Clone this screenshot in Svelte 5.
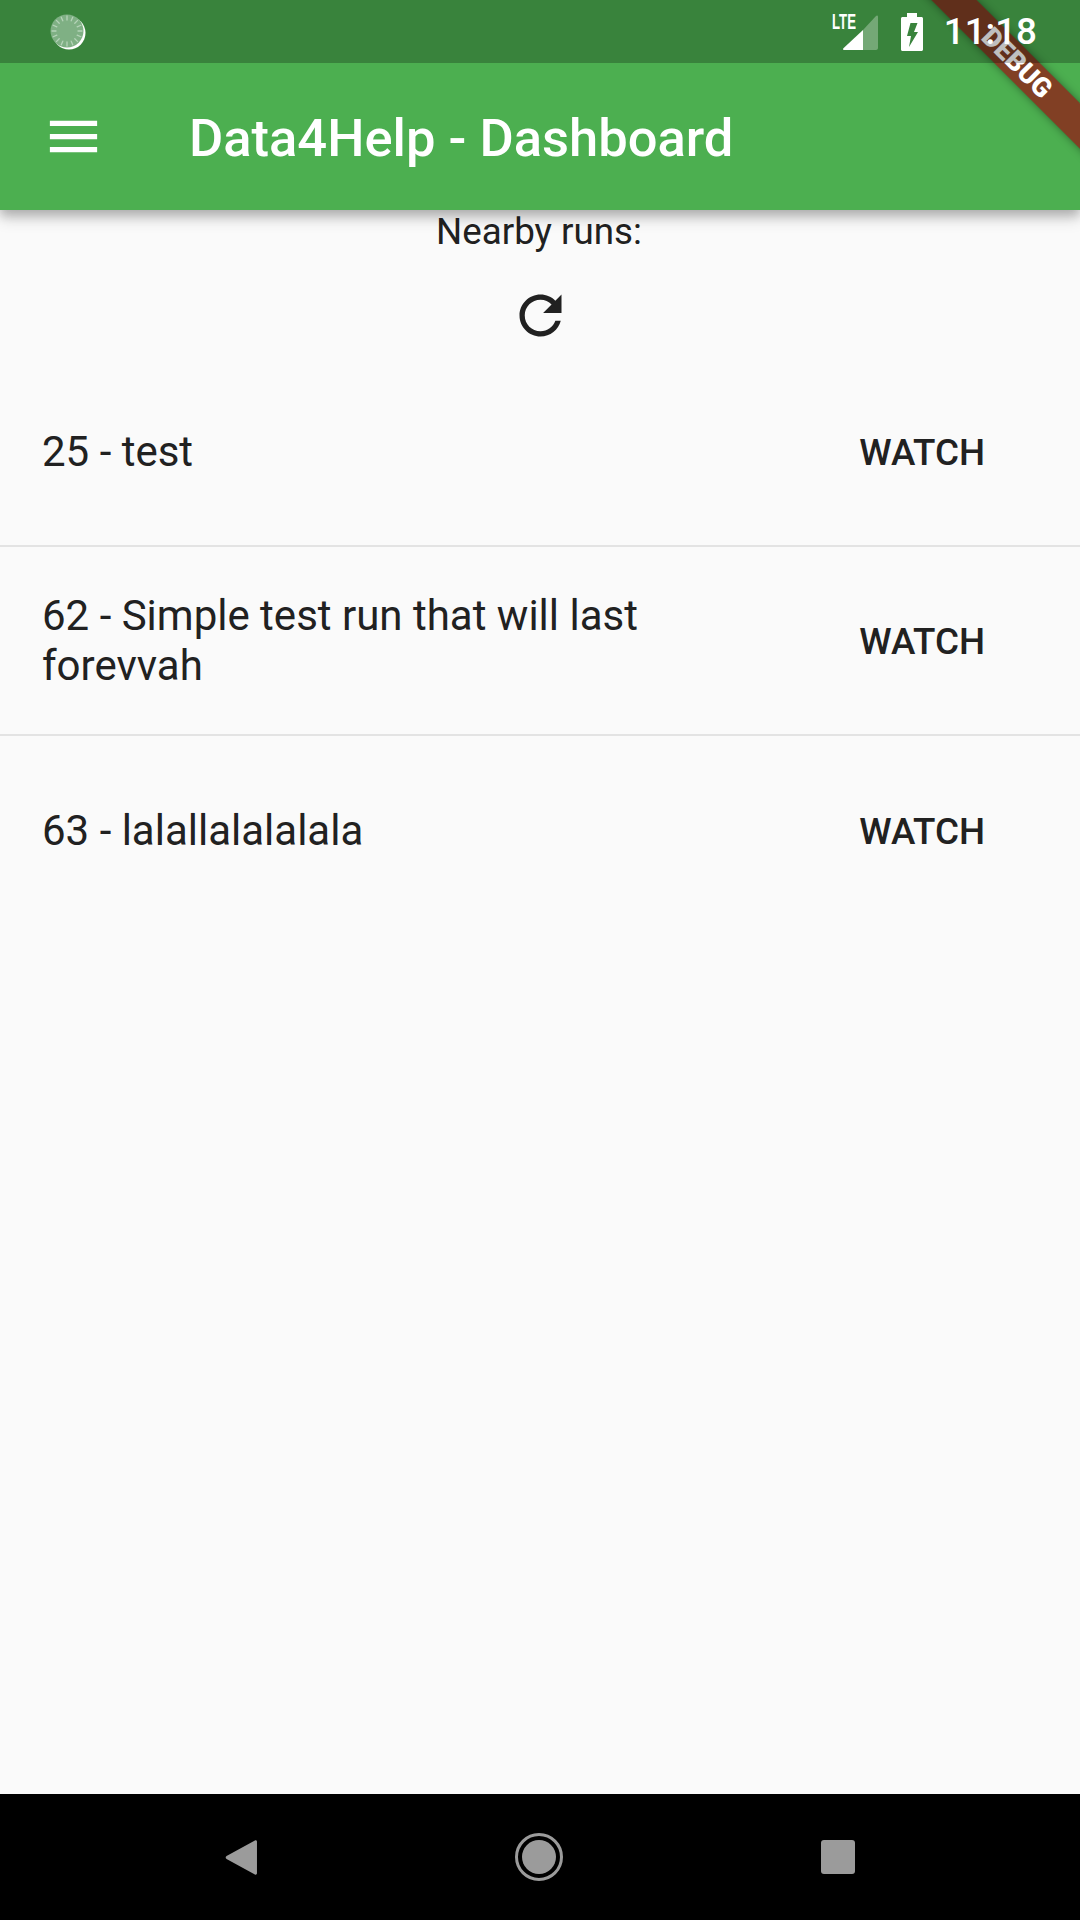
<script>
  const runs = [
    { id: 25, name: 'test' },
    { id: 62, name: 'Simple test run that will last forevvah' },
    { id: 63, name: 'lalallalalalala' }
  ];
  const ticks = Array.from({ length: 16 }, (_, i) => i * 22.5);
</script>

<div class="phone">
  <header class="appbar">
    <svg class="menu" viewBox="0 0 24 24" aria-hidden="true"><path d="M3 18h18v-2H3v2zm0-5h18v-2H3v2zm0-7v2h18V6H3z" /></svg>
    <h1>Data4Help - Dashboard</h1>
  </header>

  <main class="content">
    <p class="nearby">Nearby runs:</p>
    <div class="refresh">
      <svg viewBox="0 0 24 24" aria-hidden="true"><path d="M17.65 6.35C16.2 4.9 14.21 4 12 4c-4.42 0-7.99 3.58-7.99 8s3.57 8 7.99 8c3.73 0 6.84-2.55 7.73-6h-2.08c-.82 2.33-3.04 4-5.65 4-3.31 0-6-2.69-6-6s2.69-6 6-6c1.66 0 3.14.69 4.22 1.78L13 11h7V4l-2.35 2.35z" /></svg>
    </div>
    <ul class="runs">
      {#each runs as run}
        <li class="run">
          <span class="run-name">{run.id} - {run.name}</span>
          <span class="watch">WATCH</span>
        </li>
      {/each}
    </ul>
  </main>

  <nav class="navbar">
    <svg class="nav-back" viewBox="0 0 32 37" preserveAspectRatio="none" aria-hidden="true"><path d="M29 1.5 1.5 17a2 2 0 0 0 0 3L29 35.5c1 .6 2 0 2-1.200V2.700c0-1.200-1-1.800-2-1.200z" /></svg>
    <svg class="nav-home" viewBox="0 0 48 48" aria-hidden="true"><circle cx="24" cy="24" r="22.500" fill="none" stroke-width="3" /><circle class="fill" cx="24" cy="24" r="17" /></svg>
    <span class="nav-square"></span>
  </nav>

  <div class="banner"><span>DEBUG</span></div>

  <div class="statusbar">
    <svg class="spinner" viewBox="0 0 36 38" aria-hidden="true">
      <circle cx="19" cy="20" r="16.500" fill="#fff" />
      <circle cx="17" cy="18" r="16.500" fill="#7fb084" />
      <g stroke="#b5d3b8" stroke-width="1.300" stroke-linecap="round">
        {#each ticks as t}
          <line x1="17" y1="3" x2="17" y2="7" transform="rotate({t} 17 18)" />
        {/each}
      </g>
    </svg>
    <span class="spacer"></span>
    <div class="signal">
      <span class="lte">LTE</span>
      <svg viewBox="0 0 35 35" aria-hidden="true">
        <path class="dim" d="M20 15 33 1c1-1 2-.5 2 1v31c0 1-1 2-2 2H20z" />
        <path d="M20 15v20H1c-1 0-1.300-1-.6-1.700z" />
      </svg>
    </div>
    <svg class="battery" viewBox="0 0 22 38" aria-hidden="true">
      <path fill-rule="evenodd" d="M6 0h10v4h4.500c.8 0 1.500.7 1.500 1.500V36.500c0 .8-.7 1.500-1.500 1.500H1.500C.7 38 0 37.300 0 36.500V5.500C0 4.700.7 4 1.500 4H6zM9.500 10 6 23h4L8 34l9-15h-4l3.500-9z" />
    </svg>
    <span class="time">11:18</span>
  </div>
</div>

<style>
  :global(body) {
    margin: 0;
    background: #fafafa;
  }

  .phone {
    position: relative;
    display: flex;
    flex-direction: column;
    width: 1080px;
    height: 1920px;
    overflow: hidden;
    background: #fafafa;
    color: #212121;
    font-family: Roboto, sans-serif;
  }

  .appbar {
    position: relative;
    z-index: 1;
    flex: none;
    display: flex;
    align-items: center;
    box-sizing: border-box;
    height: 210px;
    padding: 63px 0 0 42px;
    background: #4caf50;
    color: #fff;
    box-shadow: 0 5px 10px rgba(0, 0, 0, 0.22), 0 10px 14px rgba(0, 0, 0, 0.12);
  }

  .menu {
    flex: none;
    width: 63px;
    height: 63px;
    fill: #fff;
  }

  h1 {
    margin: 3px 0 0 84px;
    font-size: 52.5px;
    font-weight: 500;
    line-height: 63px;
  }

  .content {
    flex: 1;
    min-height: 0;
    display: flex;
    flex-direction: column;
  }

  .nearby {
    margin: 0;
    padding-right: 2px;
    height: 43px;
    font-size: 36.75px;
    line-height: 43px;
    text-align: center;
  }

  .refresh {
    display: flex;
    justify-content: center;
    align-items: center;
    box-sizing: border-box;
    height: 105px;
    padding-top: 20px;
  }

  .refresh svg {
    width: 63px;
    height: 63px;
    fill: #212121;
  }

  .runs {
    margin: 0;
    padding: 0;
    list-style: none;
  }

  .run {
    display: flex;
    align-items: center;
    justify-content: space-between;
    box-sizing: border-box;
    height: 189px;
    padding: 0 95px 0 42px;
    border-bottom: 2px solid #e3e3e3;
  }

  .run:last-child {
    border-bottom: 0;
  }

  .run-name {
    width: 650px;
    font-size: 42px;
    line-height: 50px;
  }

  .watch {
    margin-top: 1px;
    font-size: 36.75px;
    font-weight: 500;
  }

  .navbar {
    flex: none;
    position: relative;
    display: flex;
    align-items: center;
    box-sizing: border-box;
    height: 126px;
    padding-left: 225px;
    background: #000;
  }

  .nav-back {
    flex: none;
    width: 33px;
    height: 37px;
    fill: #9b9b9b;
  }

  .nav-home {
    flex: none;
    width: 48px;
    height: 48px;
    margin-left: 257px;
    stroke: #9b9b9b;
  }

  .nav-home .fill {
    fill: #9b9b9b;
    stroke: none;
  }

  .nav-square {
    flex: none;
    width: 34px;
    height: 34px;
    margin-left: 258px;
    border-radius: 3px;
    background: #9b9b9b;
  }

  .banner {
    position: absolute;
    z-index: 2;
    top: 47px;
    left: 877px;
    display: flex;
    align-items: center;
    justify-content: center;
    width: 280px;
    height: 32px;
    background: rgba(150, 20, 20, 0.72);
    box-shadow: 0 0 8px rgba(0, 0, 0, 0.4);
    color: #fff;
    font-size: 27px;
    font-weight: 900;
    transform: rotate(45deg);
  }

  .statusbar {
    position: absolute;
    z-index: 3;
    top: 0;
    left: 0;
    right: 0;
    display: flex;
    align-items: center;
    box-sizing: border-box;
    height: 63px;
    padding: 0 43px 0 50px;
    background: rgba(0, 0, 0, 0.25);
    color: #fff;
  }

  .spinner {
    flex: none;
    width: 36px;
    height: 38px;
  }

  .spacer {
    flex: 1;
  }

  .signal {
    position: relative;
    display: flex;
    flex: none;
    width: 46px;
    height: 35px;
    margin-top: 1px;
    justify-content: flex-end;
  }

  .signal svg {
    width: 35px;
    height: 35px;
    fill: #fff;
  }

  .signal .dim {
    opacity: 0.3;
  }

  .lte {
    position: absolute;
    left: 0;
    top: -4px;
    font-family: "Liberation Sans", sans-serif;
    font-size: 22px;
    font-weight: 700;
    line-height: 22px;
    transform: scaleX(0.6);
    transform-origin: left top;
  }

  .battery {
    flex: none;
    width: 22px;
    height: 38px;
    margin: 0 21px 0 23px;
    fill: #fff;
  }

  .time {
    flex: none;
    font-size: 36.75px;
    font-weight: 500;
  }
</style>
